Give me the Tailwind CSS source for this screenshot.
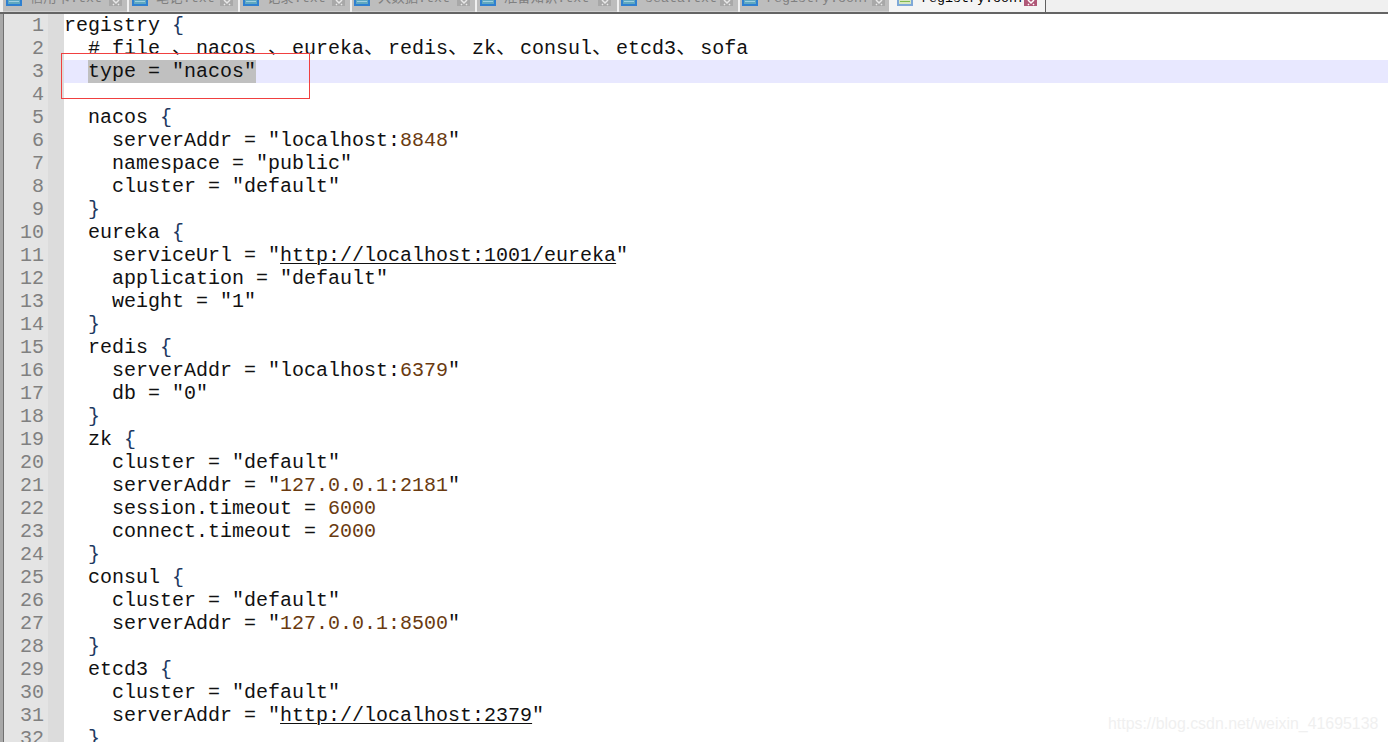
<!DOCTYPE html>
<html lang="en">
<head>
  <meta charset="UTF-8">
  <title>registry.conf</title>
  <script src="https://cdn.jsdelivr.net/npm/@tailwindcss/browser@4"></script>
</head>
<body class="bg-white w-[1388px] h-[742px] overflow-hidden relative" style="font-family: 'Liberation Mono', 'Noto Sans CJK SC', monospace;">
  <!-- tab bar, cut off at the top of the picture -->
  <div id="tabs" class="flex h-[12px] pl-[3px] bg-[#f0f0f0] overflow-hidden"></div>
  <div class="h-[2px] bg-[#646464]"></div>

  <div class="flex">
    <div class="w-[4px] bg-[#a8a8a8] border-r border-[#707070] shrink-0"></div>
    <div id="editor" class="flex-1 min-w-0"></div>
  </div>

  <!-- red box drawn over the screenshot -->
  <div class="absolute left-[61px] top-[53px] w-[249px] h-[46px] border border-[#f04040]"></div>
  <div class="absolute left-[1108px] top-[713px] text-[15.9px] leading-[22px] text-[#f0f0f0] whitespace-nowrap" style="font-family: 'Liberation Sans', sans-serif;">https://blog.csdn.net/weixin_41695138</div>

  <script>
    const tabs = [
      { name: '信用卡.txt', w: 'w-[124px]', pl: 'pl-[3px]', pr: 'pr-[5px]' },
      { name: '笔记.txt', w: 'w-[109px]', pl: 'pl-[3px]', pr: 'pr-[5px]' },
      { name: '记录.txt', w: 'w-[110px]', pl: 'pl-[3px]', pr: 'pr-[5px]' },
      { name: '大数据.txt', w: 'w-[123px]', pl: 'pl-[2px]', pr: 'pr-[5px]' },
      { name: '准备知识.txt', w: 'w-[140px]', pl: 'pl-[3px]', pr: 'pr-[6px]' },
      { name: 'seata.txt', w: 'w-[119px]', pl: 'pl-[2px]', pr: 'pr-[5px]' },
      { name: 'registry.conf', w: 'w-[149px]', pl: 'pl-[2px]', pr: 'pr-[4px]' },
    ];

    const closeBtn = (box, x) => `
      <svg class="w-[13px] h-[6px] shrink-0" viewBox="0 0 13 6"><rect width="13" height="6" fill="${box}"/><path d="M4 0L7 3L10 0M4 5L5 4M10 5L9 4" stroke="${x}" stroke-width="1.5" fill="none"/></svg>`;

    const tabEl = (t, active) => `
      <div class="${t.w} ${t.pl} ${t.pr} h-[12px] shrink-0 flex items-start justify-between ${active ? 'bg-[#f4f4f4]' : 'bg-[#bdbdbd] border-b border-[#d0d0d0]'}">
        <div class="flex items-start min-w-0">
          <svg class="w-[16px] h-[6px] shrink-0" viewBox="0 0 16 6">
            <rect width="16" height="6" fill="${active ? '#7fa8d8' : '#2f80d0'}"/>
            <rect x="2" width="12" height="4" fill="${active ? '#d8e8c0' : '#60a8c0'}"/>
            <rect x="3" y="1" width="10" height="1" fill="${active ? '#80b850' : '#a0d0e0'}"/>
          </svg>
          <span class="ml-[8px] -mt-[9px] text-[13.33px] leading-[16px] whitespace-pre ${active ? 'text-[#000000]' : 'text-[#808080]'}">${t.name}</span>
        </div>
        ${active ? closeBtn('#b05878', '#ffffff') : closeBtn('#a8a8a8', '#e8e8e8')}
      </div>`;

    document.getElementById('tabs').innerHTML =
      tabs.map((t) => tabEl(t, false)).join('<div class="w-[2px] h-[12px] shrink-0 bg-[#f0f0f0]"></div>') +
      tabEl({ name: 'registry.conf', w: 'w-[156px]', pl: 'pl-[8px]', pr: 'pr-[8px]' }, true) +
      '<div class="w-[1px] h-[12px] shrink-0 bg-[#606060]"></div>';

    // small helpers for the syntax colours
    const n = (s) => `<span class="text-[#6a3a10]">${s}</span>`;
    const b = (s) => `<span class="text-[#203860]">${s}</span>`;
    const cjk = '<span class="inline-block w-[24px]">、</span>';
    const url = (s) => `<span class="underline decoration-1 underline-offset-[2px]">${s}</span>`;

    const lines = [
      `registry ${b('{')}`,
      `  # file ${cjk}nacos ${cjk}eureka${cjk}redis${cjk}zk${cjk}consul${cjk}etcd3${cjk}sofa`,
      `  <span class="inline-block bg-[#c0c0c0]">type = "nacos"</span>`,
      ``,
      `  nacos ${b('{')}`,
      `    serverAddr = "localhost:${n('8848')}"`,
      `    namespace = "public"`,
      `    cluster = "default"`,
      `  ${b('}')}`,
      `  eureka ${b('{')}`,
      `    serviceUrl = "${url('http://localhost:1001/eureka')}"`,
      `    application = "default"`,
      `    weight = "1"`,
      `  ${b('}')}`,
      `  redis ${b('{')}`,
      `    serverAddr = "localhost:${n('6379')}"`,
      `    db = "0"`,
      `  ${b('}')}`,
      `  zk ${b('{')}`,
      `    cluster = "default"`,
      `    serverAddr = "${n('127.0.0.1:2181')}"`,
      `    session.timeout = ${n('6000')}`,
      `    connect.timeout = ${n('2000')}`,
      `  ${b('}')}`,
      `  consul ${b('{')}`,
      `    cluster = "default"`,
      `    serverAddr = "${n('127.0.0.1:8500')}"`,
      `  ${b('}')}`,
      `  etcd3 ${b('{')}`,
      `    cluster = "default"`,
      `    serverAddr = "${url('http://localhost:2379')}"`,
      `  ${b('}')}`,
    ];

    document.getElementById('editor').innerHTML = lines.map((line, i) => `
      <div class="flex h-[23px] text-[20px] leading-[23px] text-[#111111]">
        <div class="w-[44px] pr-[4px] shrink-0 bg-[#e4e4e4] text-right text-[#808080]">${i + 1}</div>
        <div class="w-[16px] shrink-0 bg-[#dcdcdc]"></div>
        <div class="flex-1 whitespace-pre ${i === 2 ? 'bg-[#e8e8ff]' : ''}">${line}</div>
      </div>`).join('');
  </script>
</body>
</html>
